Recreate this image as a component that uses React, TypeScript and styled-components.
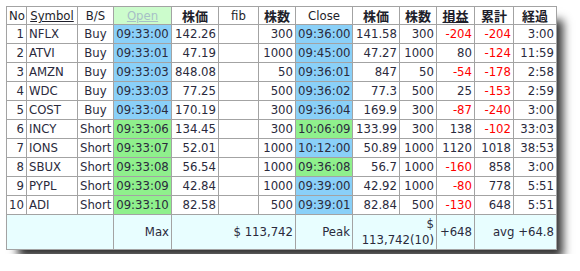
import React from "react";
import styled, { createGlobalStyle } from "styled-components";

const Global = createGlobalStyle`
  html, body { margin: 0; padding: 0; background: #ffffff; }
  body { font-family: "DejaVu Sans Condensed", "DejaVu Sans", sans-serif; }
`;

const Page = styled.div`
  padding: 6px 0 0 6px;
`;

const Frame = styled.div`
  display: inline-block;
  box-shadow: 9px 11px 9px -3px rgba(0, 0, 0, 0.8);
`;

const Table = styled.table`
  border-collapse: collapse;
  table-layout: fixed;
  width: 551px;
  background: #ffffff;
  font-size: 13px;
  line-height: 16px;
  color: #2a2a3c;
`;

type Align = "left" | "right" | "center";

const Th = styled.th<{ $cjk?: boolean; $bg?: string }>`
  border: 1px solid #a3a3a3;
  padding: 1px 2px 0;
  height: 16px;
  font-weight: ${(p) => (p.$cjk ? 700 : 400)};
  font-family: ${(p) =>
    p.$cjk
      ? '"Noto Sans CJK JP", "DejaVu Sans", sans-serif'
      : '"DejaVu Sans Condensed", "DejaVu Sans", sans-serif'};
  font-size: 13px;
  color: #1e1e2a;
  text-align: center;
  background: ${(p) => p.$bg ?? "transparent"};
  white-space: nowrap;
  overflow: hidden;
`;

const Link = styled.span<{ $light?: boolean }>`
  text-decoration: underline;
  color: ${(p) => (p.$light ? "#a7bfc6" : "inherit")};
`;

const Td = styled.td<{ $align?: Align; $bg?: string; $red?: boolean }>`
  border: 1px solid #a3a3a3;
  padding: 1px 2px;
  height: 16px;
  text-align: ${(p) => p.$align ?? "right"};
  background: ${(p) => p.$bg ?? "transparent"};
  color: ${(p) => (p.$red ? "#ff0000" : "inherit")};
  white-space: nowrap;
`;

const FootRow = styled.tr`
  background: #e8feff;
`;

const FootTd = styled.td<{ $wrap?: boolean }>`
  border: 1px solid #a3a3a3;
  padding: 1px 2px;
  height: 32px;
  text-align: right;
  vertical-align: middle;
  white-space: ${(p) => (p.$wrap ? "normal" : "nowrap")};
`;

const BLUE = "#8ad0f8";
const GREEN = "#8ff08c";

type Row = {
  no: number;
  sym: string;
  bs: string;
  open: string;
  openGreen: boolean;
  p1: string;
  qty: string;
  close: string;
  closeGreen: boolean;
  p2: string;
  qty2: string;
  pl: string;
  cum: string;
  el: string;
};

const rows: Row[] = [
  { no: 1, sym: "NFLX", bs: "Buy", open: "09:33:00", openGreen: false, p1: "142.26", qty: "300", close: "09:36:00", closeGreen: false, p2: "141.58", qty2: "300", pl: "-204", cum: "-204", el: "3:00" },
  { no: 2, sym: "ATVI", bs: "Buy", open: "09:33:01", openGreen: false, p1: "47.19", qty: "1000", close: "09:45:00", closeGreen: false, p2: "47.27", qty2: "1000", pl: "80", cum: "-124", el: "11:59" },
  { no: 3, sym: "AMZN", bs: "Buy", open: "09:33:03", openGreen: false, p1: "848.08", qty: "50", close: "09:36:01", closeGreen: false, p2: "847", qty2: "50", pl: "-54", cum: "-178", el: "2:58" },
  { no: 4, sym: "WDC", bs: "Buy", open: "09:33:03", openGreen: false, p1: "77.25", qty: "500", close: "09:36:02", closeGreen: false, p2: "77.3", qty2: "500", pl: "25", cum: "-153", el: "2:59" },
  { no: 5, sym: "COST", bs: "Buy", open: "09:33:04", openGreen: false, p1: "170.19", qty: "300", close: "09:36:04", closeGreen: false, p2: "169.9", qty2: "300", pl: "-87", cum: "-240", el: "3:00" },
  { no: 6, sym: "INCY", bs: "Short", open: "09:33:06", openGreen: true, p1: "134.45", qty: "300", close: "10:06:09", closeGreen: true, p2: "133.99", qty2: "300", pl: "138", cum: "-102", el: "33:03" },
  { no: 7, sym: "IONS", bs: "Short", open: "09:33:07", openGreen: true, p1: "52.01", qty: "1000", close: "10:12:00", closeGreen: false, p2: "50.89", qty2: "1000", pl: "1120", cum: "1018", el: "38:53" },
  { no: 8, sym: "SBUX", bs: "Short", open: "09:33:08", openGreen: true, p1: "56.54", qty: "1000", close: "09:36:08", closeGreen: true, p2: "56.7", qty2: "1000", pl: "-160", cum: "858", el: "3:00" },
  { no: 9, sym: "PYPL", bs: "Short", open: "09:33:09", openGreen: true, p1: "42.84", qty: "1000", close: "09:39:00", closeGreen: false, p2: "42.92", qty2: "1000", pl: "-80", cum: "778", el: "5:51" },
  { no: 10, sym: "ADI", bs: "Short", open: "09:33:10", openGreen: true, p1: "82.58", qty: "500", close: "09:39:01", closeGreen: false, p2: "82.84", qty2: "500", pl: "-130", cum: "648", el: "5:51" },
];

const widths = [20, 51, 36, 58, 47, 40, 37, 57, 47, 37, 38, 39, 43];

const neg = (s: string) => s.startsWith("-");

export default function App() {
  return (
    <>
      <Global />
      <Page>
        <Frame>
          <Table>
            <colgroup>
              {widths.map((w, i) => (
                <col key={i} style={{ width: w }} />
              ))}
            </colgroup>
            <thead>
              <tr>
                <Th>No</Th>
                <Th>
                  <Link>Symbol</Link>
                </Th>
                <Th>B/S</Th>
                <Th $bg="#ccfccc">
                  <Link $light>Open</Link>
                </Th>
                <Th $cjk>株価</Th>
                <Th>fib</Th>
                <Th $cjk>株数</Th>
                <Th>Close</Th>
                <Th $cjk>株価</Th>
                <Th $cjk>株数</Th>
                <Th $cjk>
                  <Link>損益</Link>
                </Th>
                <Th $cjk>累計</Th>
                <Th $cjk>経過</Th>
              </tr>
            </thead>
            <tbody>
              {rows.map((r) => (
                <tr key={r.no}>
                  <Td>{r.no}</Td>
                  <Td $align="left">{r.sym}</Td>
                  <Td $align="center">{r.bs}</Td>
                  <Td $align="center" $bg={r.openGreen ? GREEN : BLUE}>
                    {r.open}
                  </Td>
                  <Td>{r.p1}</Td>
                  <Td></Td>
                  <Td>{r.qty}</Td>
                  <Td $align="center" $bg={r.closeGreen ? GREEN : BLUE}>
                    {r.close}
                  </Td>
                  <Td>{r.p2}</Td>
                  <Td>{r.qty2}</Td>
                  <Td $red={neg(r.pl)}>{r.pl}</Td>
                  <Td $red={neg(r.cum)}>{r.cum}</Td>
                  <Td>{r.el}</Td>
                </tr>
              ))}
            </tbody>
            <tfoot>
              <FootRow>
                <FootTd colSpan={3}></FootTd>
                <FootTd>Max</FootTd>
                <FootTd colSpan={3}>$ 113,742</FootTd>
                <FootTd>Peak</FootTd>
                <FootTd colSpan={2} $wrap>
                  $ 113,742(10)
                </FootTd>
                <FootTd>+648</FootTd>
                <FootTd colSpan={2}>avg +64.8</FootTd>
              </FootRow>
            </tfoot>
          </Table>
        </Frame>
      </Page>
    </>
  );
}
